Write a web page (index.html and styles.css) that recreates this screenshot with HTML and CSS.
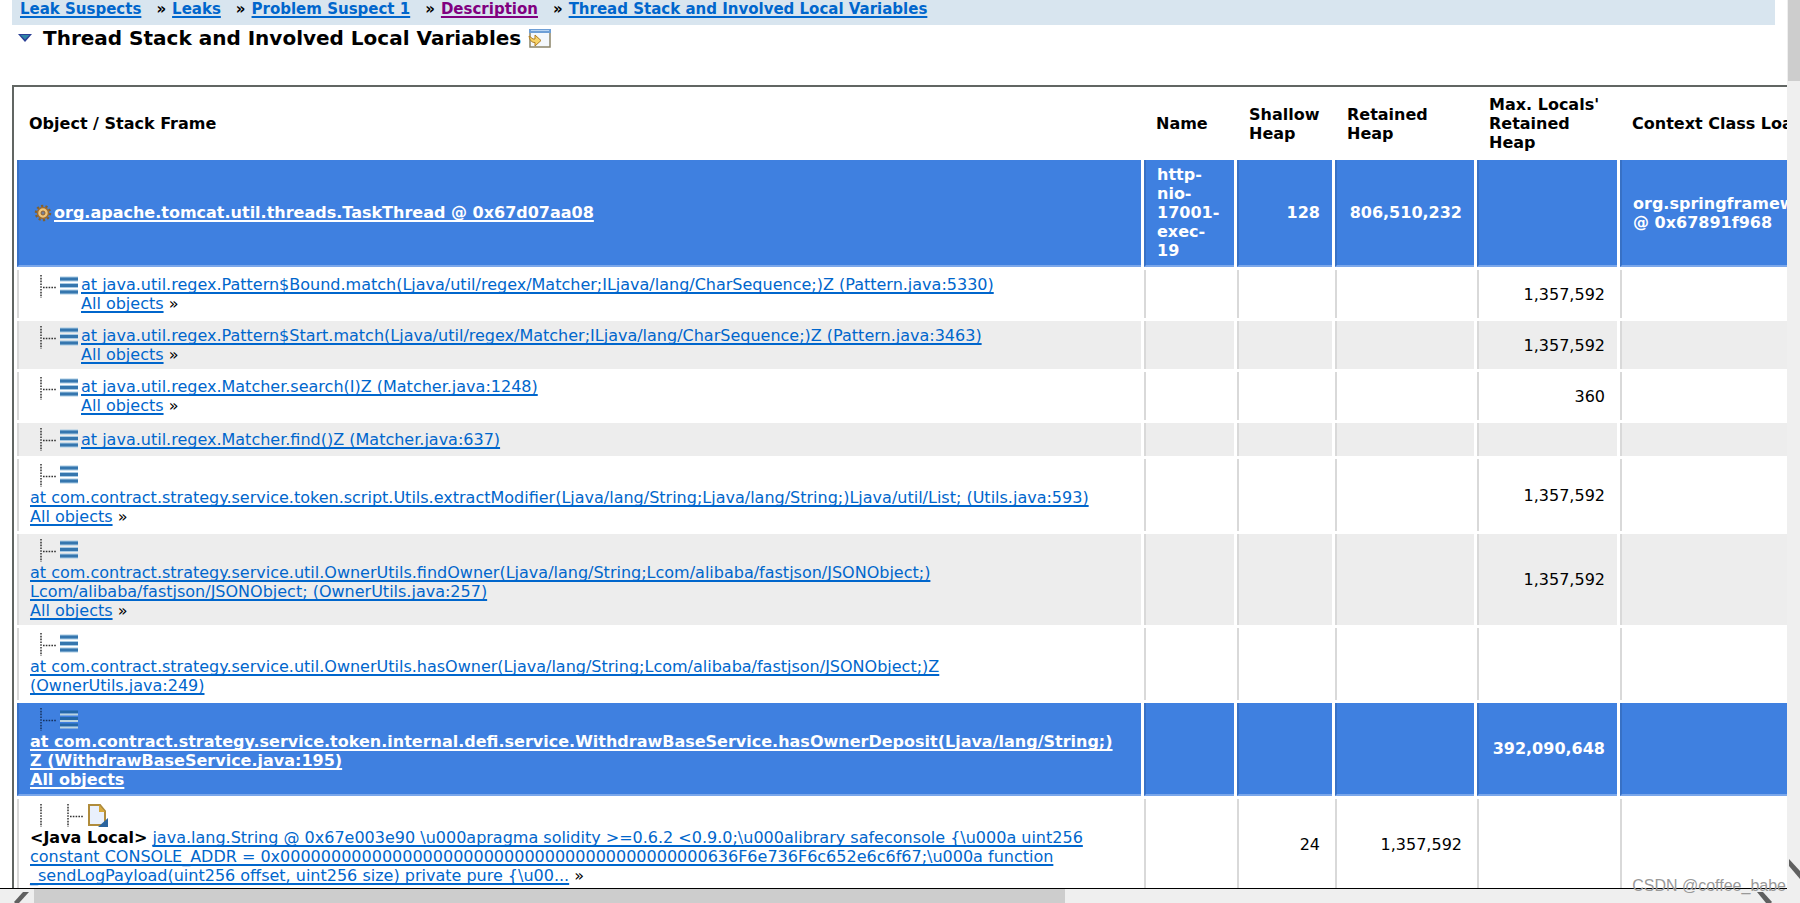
FILE: index.html
```html
<!DOCTYPE html>
<html lang="en">
<head>
<meta charset="utf-8">
<title>Thread Stack and Involved Local Variables</title>
<link rel="stylesheet" href="styles.css">
</head>
<body>
<svg width="0" height="0" class="defs" aria-hidden="true">
  <symbol id="frame" viewBox="0 0 51 23">
    <path d="M11 0V23M13 12.5H27" stroke="#333" stroke-width="1.500" stroke-dasharray="1.6 1.2" fill="none"/>
    <path d="M30 4H48M30 10.500H48M30 17H48" stroke="#a9cbe4" stroke-width="5"/>
    <path d="M30 4H48M30 10.500H48M30 17H48" stroke="#3576ae" stroke-width="3"/>
  </symbol>
  <symbol id="frame-hot" viewBox="0 0 51 23">
    <path d="M11 0V23M13 12.500H27" stroke="#16305c" stroke-width="1.500" stroke-dasharray="1.6 1.2" fill="none"/>
    <path d="M30 4H48M30 10.500H48M30 17H48" stroke="#2468a8" stroke-width="3"/>
    <path d="M30 6.500H48M30 13H48M30 19.500H48" stroke="#b9d3e0" stroke-width="2"/>
  </symbol>
</svg>
<div class="window">
  <main class="page">
    <nav class="crumbs">
      <a href="#">Leak Suspects</a><span>»</span>
      <a href="#">Leaks</a><span>»</span>
      <a href="#">Problem Suspect 1</a><span>»</span>
      <a href="#" class="visited">Description</a><span>»</span>
      <a href="#">Thread Stack and Involved Local Variables</a>
    </nav>
    <h1 class="title">
      <svg class="toggle" width="14" height="8" viewBox="0 0 14 8"><path d="M0 0H14L7 8Z" fill="#2b3f96"/><path d="M2.500 1H11.500L7 5.500Z" fill="#2f86a8"/></svg>
      Thread Stack and Involved Local Variables
      <svg class="open" width="23" height="19" viewBox="0 0 23 19"><rect x="2" y="1" width="20" height="17" fill="#f4f8fc" stroke="#8b8468" stroke-width="1.500"/><rect x="1" y="0" width="22" height="4" fill="#6e9fd6"/><path d="M3 1.500H21" stroke="#b8d4f2"/><path d="M1 7L5 10H7V6L13 11.500L7 17V13.500C4 13.500 2 12 1 7Z" fill="#f8d468" stroke="#b07c22"/></svg>
    </h1>
    <table class="stack">
      <colgroup><col class="c-object"><col class="c-name"><col class="c-shallow"><col class="c-retained"><col class="c-max"><col></colgroup>
      <thead>
        <tr><th>Object / Stack Frame</th><th>Name</th><th>Shallow<br>Heap</th><th>Retained<br>Heap</th><th>Max. Locals'<br>Retained<br>Heap</th><th>Context Class Loader</th></tr>
      </thead>
      <tbody>
        <tr class="hot">
          <td><div class="node"><svg class="gear" width="24" height="18" viewBox="0 0 24 18"><circle cx="13" cy="9" r="7" fill="none" stroke="#80602f" stroke-width="2.500" stroke-dasharray="2.200 2.200"/><circle cx="13" cy="9" r="5.500" fill="#eec57a" stroke="#9a6a35" stroke-width="1.500"/><circle cx="13" cy="9" r="2" fill="#74809c" stroke="#8f6132"/></svg><a href="#">org.apache.tomcat.util.threads.TaskThread @ 0x67d07aa08</a></div></td>
          <td>http-<br>nio-<br>17001-<br>exec-<br>19</td><td class="num">128</td><td class="num">806,510,232</td><td></td><td>org.springframework<br>@ 0x67891f968</td>
        </tr>
        <tr>
          <td><div class="node"><svg class="icon"><use href="#frame"/></svg><div><a href="#">at java.util.regex.Pattern$Bound.match(Ljava/util/regex/Matcher;ILjava/lang/CharSequence;)Z (Pattern.java:5330)</a><br><a href="#">All objects</a> »</div></div></td>
          <td></td><td></td><td></td><td class="num">1,357,592</td><td></td>
        </tr>
        <tr class="alt">
          <td><div class="node"><svg class="icon"><use href="#frame"/></svg><div><a href="#">at java.util.regex.Pattern$Start.match(Ljava/util/regex/Matcher;ILjava/lang/CharSequence;)Z (Pattern.java:3463)</a><br><a href="#">All objects</a> »</div></div></td>
          <td></td><td></td><td></td><td class="num">1,357,592</td><td></td>
        </tr>
        <tr>
          <td><div class="node"><svg class="icon"><use href="#frame"/></svg><div><a href="#">at java.util.regex.Matcher.search(I)Z (Matcher.java:1248)</a><br><a href="#">All objects</a> »</div></div></td>
          <td></td><td></td><td></td><td class="num">360</td><td></td>
        </tr>
        <tr class="alt">
          <td><div class="node"><svg class="icon"><use href="#frame"/></svg><a href="#">at java.util.regex.Matcher.find()Z (Matcher.java:637)</a></div></td>
          <td></td><td></td><td></td><td></td><td></td>
        </tr>
        <tr>
          <td><div class="lead"><svg class="icon"><use href="#frame"/></svg></div><a href="#">at com.contract.strategy.service.token.script.Utils.extractModifier(Ljava/lang/String;Ljava/lang/String;)Ljava/util/List; (Utils.java:593)</a><br><a href="#">All objects</a> »</td>
          <td></td><td></td><td></td><td class="num">1,357,592</td><td></td>
        </tr>
        <tr class="alt">
          <td><div class="lead"><svg class="icon"><use href="#frame"/></svg></div><a href="#">at com.contract.strategy.service.util.OwnerUtils.findOwner(Ljava/lang/String;Lcom/alibaba/fastjson/JSONObject;)<br>Lcom/alibaba/fastjson/JSONObject; (OwnerUtils.java:257)</a><br><a href="#">All objects</a> »</td>
          <td></td><td></td><td></td><td class="num">1,357,592</td><td></td>
        </tr>
        <tr>
          <td><div class="lead"><svg class="icon"><use href="#frame"/></svg></div><a href="#">at com.contract.strategy.service.util.OwnerUtils.hasOwner(Ljava/lang/String;Lcom/alibaba/fastjson/JSONObject;)Z<br>(OwnerUtils.java:249)</a></td>
          <td></td><td></td><td></td><td></td><td></td>
        </tr>
        <tr class="hot">
          <td><div class="lead"><svg class="icon"><use href="#frame-hot"/></svg></div><a href="#">at com.contract.strategy.service.token.internal.defi.service.WithdrawBaseService.hasOwnerDeposit(Ljava/lang/String;)<br>Z (WithdrawBaseService.java:195)</a><br><a href="#">All objects</a></td>
          <td></td><td></td><td></td><td class="num">392,090,648</td><td></td>
        </tr>
        <tr>
          <td><div class="lead"><svg width="80" height="23" viewBox="0 0 80 23"><path d="M11 0V23M38 0V23M40 12.500H54" stroke="#333" stroke-width="1.500" stroke-dasharray="1.600 1.200" fill="none"/><path d="M59 1H70L75 7V21H59Z" fill="#e9f0fc" stroke="#b08c3c" stroke-width="2"/><path d="M69 1V8H75Z" fill="#d8a93c"/><path d="M78 14V23H68Z" fill="#2b649e"/></svg></div><b>&lt;Java Local&gt;</b> <a href="#">java.lang.String @ 0x67e003e90 \u000apragma solidity &gt;=0.6.2 &lt;0.9.0;\u000alibrary safeconsole {\u000a uint256<br>constant CONSOLE_ADDR = 0x000000000000000000000000000000000000000000636F6e736F6c652e6c6f67;\u000a function<br>_sendLogPayload(uint256 offset, uint256 size) private pure {\u00...</a> »</td>
          <td></td><td class="num">24</td><td class="num">1,357,592</td><td></td><td></td>
        </tr>
      </tbody>
    </table>
  </main>
  <div class="vbar"><div class="vthumb"></div><svg width="12" height="30" viewBox="0 0 12 30"><path d="M1 0L12 12V20L1 7Z" fill="#606060"/></svg></div>
  <div class="hbar"><svg width="34" height="14" viewBox="0 0 34 14"><path d="M23 3H29L19 14H15L14 13Z" fill="#606060"/></svg><div class="htrack"><div class="hthumb"></div></div><svg width="34" height="14" viewBox="0 0 34 14"><path d="M4 3H10L19 13L18 14H13Z" fill="#606060"/></svg></div>
</div>
<div class="watermark">CSDN @coffee_babe</div>
</body>
</html>
```
FILE: styles.css
```css
body {
  margin: 0;
  background: #fff;
  color: #000;
  font: 16px/19px "DejaVu Sans", Verdana, sans-serif;
  overflow: hidden;
}
.defs { position: absolute; }
a {
  color: #06c;
  text-decoration: underline 2px;
  text-decoration-skip-ink: none;
  text-underline-offset: 2px;
}
.window {
  display: grid;
  grid-template: minmax(0, 1fr) 14px / minmax(0, 1fr) 13px;
  height: 100vh;
}
.page {
  overflow: hidden;
  padding-left: 12px;
  border-bottom: 1px solid #000;
}
.crumbs {
  display: flex;
  align-items: flex-start;
  height: 25px;
  margin-right: 12px;
  padding-left: 8px;
  box-sizing: border-box;
  background: #d8e5ef;
  font-size: 15px;
  line-height: 18px;
  font-weight: bold;
  white-space: nowrap;
}
.crumbs span { margin: 0 6px 0 15px; }
.crumbs .visited { color: #800080; }
.title {
  display: flex;
  align-items: center;
  margin: 0 0 34px;
  padding-left: 6px;
  font-size: 20px;
  line-height: 26px;
  white-space: nowrap;
}
.toggle { margin-right: 11px; }
.open { margin-left: 7px; }
.stack {
  table-layout: fixed;
  width: calc(100vw + 1180px);
  border: 2px solid #616663;
  border-spacing: 3px;
}
.c-object { width: calc(100vw - 676px); }
.c-name { width: 90px; }
.c-shallow { width: 95px; }
.c-retained { width: 139px; }
.c-max { width: 140px; }
th, td {
  box-sizing: border-box;
  padding: 5px 12px 5px 11px;
  border-left: 2px solid #d9d9d9;
  text-align: left;
  white-space: nowrap;
}
th { border-left: 1px solid transparent; }
.alt td { background: #ededed; }
.hot td {
  background: #3f80e0;
  border-left-color: #3871c5;
  border-bottom: 2px solid #7ba7ea;
  color: #fff;
  font-weight: bold;
}
.hot a { color: #fff; }
td.num { text-align: right; }
.node { display: flex; align-items: center; }
.node > * { flex: none; }
.icon { display: block; width: 51px; height: 23px; align-self: flex-start; }
.lead { height: 24px; }
.vbar {
  display: flex;
  flex-direction: column;
  justify-content: space-between;
  padding-left: 1px;
  background: #efefef;
}
.vthumb { height: 81px; background: #cdcdcd; }
.hbar {
  grid-column: 1 / 3;
  display: flex;
  background: #efefef;
  padding-right: 13px;
}
.htrack { flex: 1; }
.hthumb { width: 60%; height: 100%; background: #cdcdcd; }
.watermark {
  position: absolute;
  right: 14px;
  bottom: 7px;
  color: #999;
  font: 16px/20px "Liberation Sans", Arial, sans-serif;
}
```
